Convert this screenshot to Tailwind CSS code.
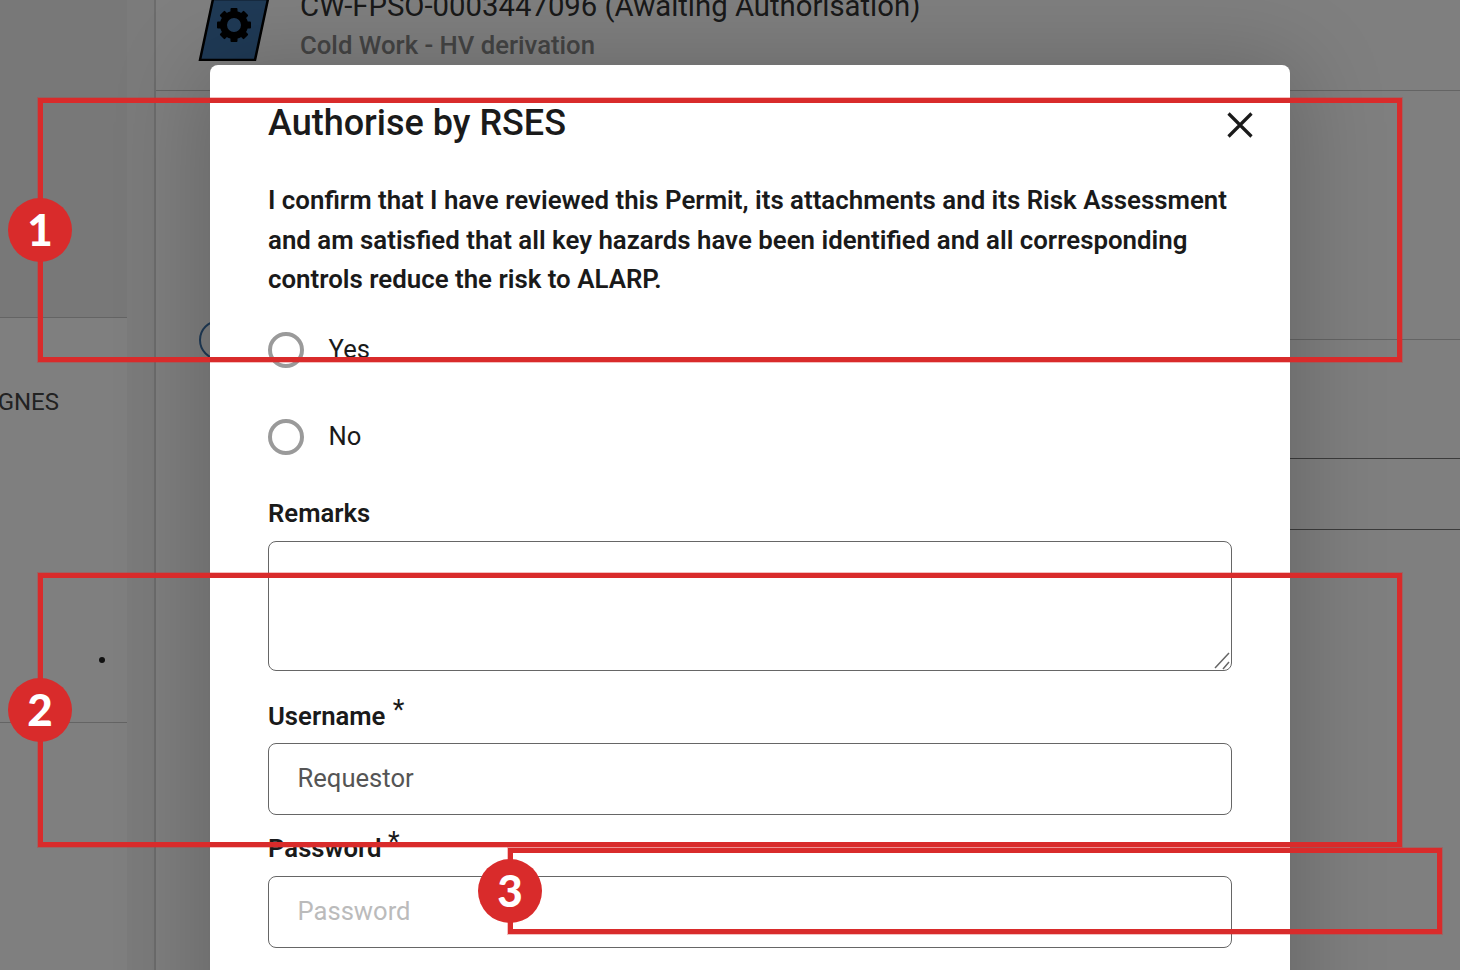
<!DOCTYPE html>
<html lang="en">
<head>
<meta charset="utf-8">
<title>Authorise by RSES</title>
<script src="https://cdn.jsdelivr.net/npm/@tailwindcss/browser@4"></script>
</head>
<body class="m-0 overflow-hidden">
<div class="relative w-[1460px] h-[970px] overflow-hidden bg-white font-['Roboto',sans-serif] text-[#1a1a1a]">
  <!-- page behind the dialog -->
  <div class="flex h-full">
    <aside class="w-[127px] shrink-0 flex flex-col">
      <div class="h-[318px] shrink-0 bg-[#f0f0f0] border-b border-[#c8c8c8]"></div>
      <div class="mt-[66px] h-[36px] w-[59px] flex justify-end overflow-hidden whitespace-nowrap text-[24px] leading-[36px] text-[#444]">ASSIGNES</div>
      <div class="mt-[237px] ml-[99px] size-[6px] rounded-full bg-[#222]"></div>
      <div class="mt-[59px] h-px bg-[#c8c8c8]"></div>
    </aside>
    <div class="w-[29px] shrink-0 bg-[#f6f6f6] border-r-2 border-[#d8d8d8]"></div>
    <main class="flex-1 min-w-0 flex flex-col">
      <header class="h-[91px] shrink-0 border-b border-[#c8c8c8] pl-[42px] flex gap-[30px]">
        <svg class="w-[72px] h-[61px] shrink-0" viewBox="0 0 72 61" aria-hidden="true">
          <polygon points="15,-1 70,-1 57,60 2,60" fill="#3f74ad" stroke="#000" stroke-width="2.5"/>
          <g transform="translate(36 25)" fill="#000">
            <circle r="10.5" fill="none" stroke="#000" stroke-width="7"/>
            <rect x="-3.5" y="-17" width="7" height="7" rx="1"/>
            <rect x="-3.5" y="-17" width="7" height="7" rx="1" transform="rotate(45)"/>
            <rect x="-3.5" y="-17" width="7" height="7" rx="1" transform="rotate(90)"/>
            <rect x="-3.5" y="-17" width="7" height="7" rx="1" transform="rotate(135)"/>
            <rect x="-3.5" y="-17" width="7" height="7" rx="1" transform="rotate(180)"/>
            <rect x="-3.5" y="-17" width="7" height="7" rx="1" transform="rotate(225)"/>
            <rect x="-3.5" y="-17" width="7" height="7" rx="1" transform="rotate(270)"/>
            <rect x="-3.5" y="-17" width="7" height="7" rx="1" transform="rotate(315)"/>
          </g>
        </svg>
        <div class="-mt-[10px]">
          <div class="text-[29.3px] leading-[32px] text-[#333] whitespace-nowrap">CW-FPSO-0003447096 (Awaiting Authorisation)</div>
          <div class="mt-[7px] text-[25.7px] leading-[32px] font-medium text-[#888] whitespace-nowrap">Cold Work - HV derivation</div>
        </div>
      </header>
      <section class="h-[249px] shrink-0 flex items-end pl-[43px]">
        <div class="size-[40px] shrink-0 -mb-[20px] rounded-full border-2 border-[#3f74ad]"></div>
        <div class="flex-1 ml-[100px] border-b border-[#c8c8c8]"></div>
      </section>
      <div class="ml-[183px] h-[119px] shrink-0 border-b border-[#777]"></div>
      <div class="ml-[183px] h-[71px] shrink-0 border-b border-[#777]"></div>
    </main>
  </div>

  <!-- backdrop -->
  <div class="absolute inset-0 bg-black/50"></div>

  <!-- dialog -->
  <div role="dialog" class="absolute left-[210px] top-[65px] w-[1080px] h-[1000px] bg-white rounded-t-[8px] shadow-[0_8px_90px_10px_rgba(0,0,0,0.2)] px-[58px]">
    <div class="flex items-start justify-between pt-[35px]">
      <h2 class="text-[36px] leading-[46px] font-medium m-0">Authorise by RSES</h2>
      <svg class="mt-[12px] -mr-[21px] size-[26px]" viewBox="0 0 26 26" fill="none" stroke="#1a1a1a" stroke-width="3.2" aria-hidden="true"><path d="M1.5 1.5 24.5 24.5M24.5 1.5 1.5 24.5"/></svg>
    </div>
    <p class="mt-[35px] mb-0 text-[25.85px] leading-[39.5px] font-semibold">I confirm that I have reviewed this Permit, its attachments and its Risk Assessment and am satisfied that all key hazards have been identified and all corresponding controls reduce the risk to ALARP.</p>
    <div class="mt-[32px] flex items-center gap-[24.6px] h-[36px]">
      <span class="size-[36px] rounded-full border-4 border-[#9a9a9a]"></span>
      <span class="text-[25.6px]">Yes</span>
    </div>
    <div class="mt-[51px] flex items-center gap-[24.6px] h-[36px]">
      <span class="size-[36px] rounded-full border-4 border-[#9a9a9a]"></span>
      <span class="text-[25.6px]">No</span>
    </div>
    <label class="block mt-[40px] text-[25.7px] leading-[36px] font-semibold">Remarks</label>
    <div class="relative mt-[10px] w-[964px] h-[130px]">
      <textarea class="block size-full resize-none border border-[#666] rounded-[8px] bg-white outline-none"></textarea>
      <svg class="absolute inset-0 size-full pointer-events-none" viewBox="0 0 964 130" fill="none" stroke="#666" stroke-width="1.5" aria-hidden="true"><path d="M947 127 961 112M955 128 961 121"/></svg>
    </div>
    <label class="block mt-[27px] text-[25.7px] leading-[36px] font-semibold">Username <sup class="top-[-6px] ml-[1px] text-[27px] font-normal">*</sup></label>
    <input class="block mt-[9px] w-[964px] h-[72px] border border-[#666] rounded-[8px] pl-[28.5px] pr-[29px] pb-[2px] text-[25.6px] text-[#555] bg-white outline-none" value="Requestor">
    <label class="block mt-[15px] text-[25.7px] leading-[36px] font-semibold">Password <sup class="top-[-6px] text-[27px] font-normal">*</sup></label>
    <input class="block mt-[10px] w-[964px] h-[72px] border border-[#666] rounded-[8px] pl-[28.5px] pr-[29px] pb-[2px] text-[25.6px] placeholder:text-[#bbb] bg-white outline-none" placeholder="Password">
  </div>

  <!-- annotations -->
  <div class="absolute left-[38px] top-[98px] w-[1364px] h-[264px] border-[5px] border-[#d92b2b] outline outline-1 outline-[#d92b2b]/30"></div>
  <div class="absolute left-[38px] top-[573px] w-[1364px] h-[274px] border-[5px] border-[#d92b2b] outline outline-1 outline-[#d92b2b]/30"></div>
  <div class="absolute left-[508px] top-[848px] w-[934px] h-[86px] border-[5px] border-[#d92b2b] outline outline-1 outline-[#d92b2b]/30"></div>
  <div class="absolute left-[8px] top-[198px] size-[64px] rounded-full bg-[#d92b2b] text-white font-black text-[44px] leading-[62px] text-center font-['Lato',sans-serif]">1</div>
  <div class="absolute left-[8px] top-[678px] size-[64px] rounded-full bg-[#d92b2b] text-white font-black text-[44px] leading-[62px] text-center font-['Lato',sans-serif]">2</div>
  <div class="absolute left-[478px] top-[859px] size-[64px] rounded-full bg-[#d92b2b] text-white font-black text-[44px] leading-[62px] text-center font-['Lato',sans-serif]">3</div>
</div>
</body>
</html>
